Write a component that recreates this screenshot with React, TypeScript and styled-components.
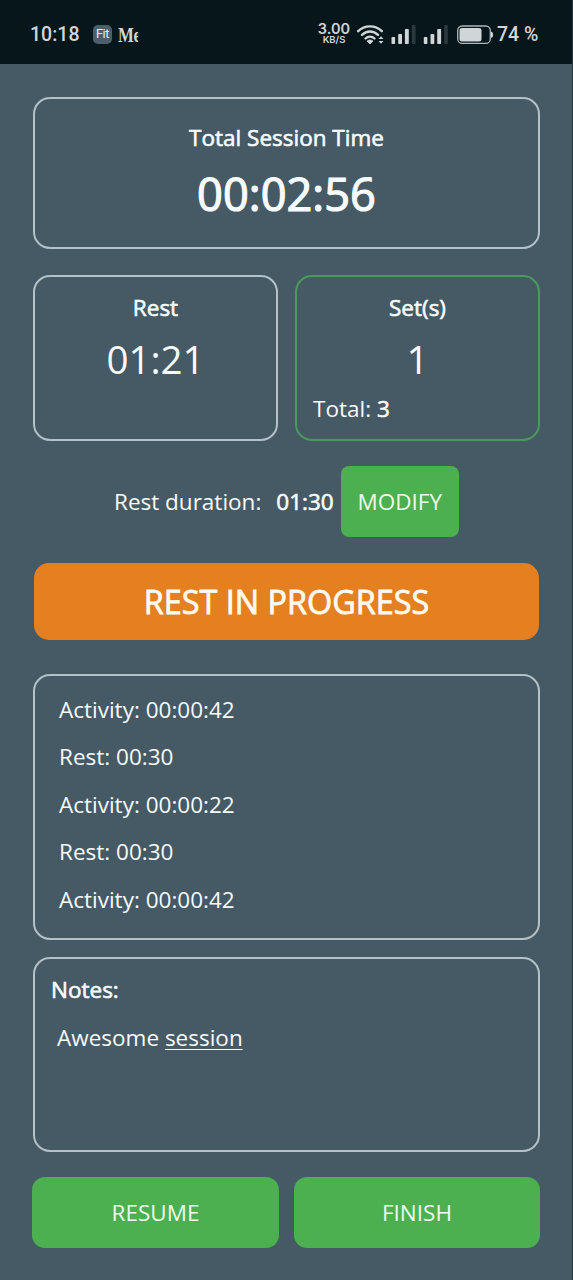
import React from 'react';
import styled, { createGlobalStyle, css } from 'styled-components';

const GlobalStyle = createGlobalStyle`
  * { box-sizing: border-box; }
  body { margin: 0; background: #455a64; }
`;

const strong = css`
  -webkit-text-stroke: 0.6px currentColor;
`;

const Screen = styled.div`
  width: 573px;
  height: 1280px;
  overflow: hidden;
  background: #455a64;
  border-right: 1px solid #27363d;
  color: #f8fbfc;
  font-family: 'Open Sans', 'Noto Sans', sans-serif;
  font-size: 22.5px;
  line-height: 32px;
  white-space: nowrap;
`;

const StatusBar = styled.header`
  width: 573px;
  height: 64px;
  padding: 5px 35px 0 30px;
  display: flex;
  align-items: center;
  background: #06161b;
  color: #d0d6d8;
  font-family: Roboto, sans-serif;
`;

const Clock = styled.span`
  width: 63px;
  font-size: 19.5px;
  font-weight: 500;
`;

const FitBadge = styled.span`
  width: 19px;
  height: 19px;
  border-radius: 5px;
  background: #4b5f6a;
  color: #e8eef0;
  font-size: 12.5px;
  line-height: 18px;
  letter-spacing: -0.3px;
  text-align: center;
`;

const CutLabel = styled.span`
  width: 24px;
  margin: 0 auto 0 6px;
  overflow: hidden;
  font: bold 20px/24px 'Liberation Serif', serif;
  letter-spacing: -0.5px;
  transform: scaleX(0.84);
  transform-origin: left;
`;

const NetSpeed = styled.div`
  width: 34px;
  margin-right: 6px;
  display: flex;
  flex-direction: column;
  align-items: center;
  font: 600 9.5px/12px Inter, sans-serif;
  b {
    font-size: 14.5px;
    font-weight: 600;
    line-height: 11px;
  }
`;

const StatusIcons = styled.svg`
  display: block;
  margin-right: 3px;
`;

const Percent = styled.span`
  width: 41px;
  font-size: 19.5px;
  font-weight: 500;
`;

const Content = styled.main`
  padding: 33px 32px 0 33px;
`;

const Card = styled.section<{ $h: number; $green?: boolean; $top?: number }>`
  height: ${p => p.$h}px;
  padding-top: ${p => p.$top ?? 15}px;
  border: 2px solid ${p => (p.$green ? '#4a9a5d' : '#b5c0c7')};
  border-radius: 17px;
`;

const Title = styled.div`
  ${strong}
  text-align: center;
`;

const SessionTime = styled.div`
  -webkit-text-stroke: 1.2px currentColor;
  margin-top: 11px;
  font-size: 45.2px;
  line-height: 58px;
  text-align: center;
`;

const CardPair = styled.div`
  margin-top: 26px;
  display: grid;
  grid-template-columns: 245px 245px;
  gap: 17px;
`;

const Figure = styled.div`
  margin-top: 9px;
  font-size: 38.5px;
  line-height: 52px;
  text-align: center;
`;

const Total = styled.div`
  margin: 8px 0 0 16px;
`;

const Strong = styled.span`
  ${strong}
`;

const DurationRow = styled.div`
  height: 71px;
  margin: 25px 0 0 81px;
  display: flex;
  align-items: center;
`;

const Duration = styled(Strong)`
  margin: 0 7px 0 15px;
`;

const Button = styled.button<{ $radius?: number }>`
  height: 100%;
  padding: 0;
  border: 0;
  border-radius: ${p => p.$radius ?? 13}px;
  background: #4caf50;
  color: #f0faee;
  font: inherit;
`;

const ModifyButton = styled(Button)`
  width: 118px;
`;

const Banner = styled.div`
  height: 77px;
  margin: 26px 0 0 1px;
  width: 505px;
  border-radius: 15px;
  background: #e48020;
  color: #fffaf0;
  font-size: 32.4px;
  line-height: 77px;
  text-align: center;
  -webkit-text-stroke: 0.8px currentColor;
`;

const LogCard = styled(Card)`
  margin-top: 34px;
  padding-left: 24px;
`;

const LogLine = styled.div`
  line-height: 47.6px;
`;

const NotesCard = styled(Card)`
  margin-top: 17px;
  padding-left: 16px;
`;

const NoteText = styled.div`
  margin: 16px 0 0 6px;
`;

const Misspelled = styled.span`
  text-decoration: underline;
  text-decoration-thickness: 1px;
  text-underline-offset: 3px;
  text-decoration-skip-ink: none;
`;

const Actions = styled.div`
  height: 71px;
  margin: 25px -2px 0 -1px;
  display: grid;
  grid-template-columns: 247px 246px;
  gap: 15px;
`;

const log = [
  'Activity: 00:00:42',
  'Rest: 00:30',
  'Activity: 00:00:22',
  'Rest: 00:30',
  'Activity: 00:00:42',
];

function Signal({ x }: { x: number }) {
  return (
    <g fill="#d0d6d8">
      <rect x={x} y="13" width="3.6" height="7" rx="0.8" />
      <rect x={x + 6.7} y="10" width="3.8" height="10" rx="0.8" />
      <rect x={x + 13.4} y="5" width="3.9" height="15" rx="0.8" />
      <rect x={x + 20.4} y="1" width="3.6" height="19" rx="0.8" fill="#2c393e" />
    </g>
  );
}

export default function App() {
  return (
    <>
      <GlobalStyle />
      <Screen>
        <StatusBar>
          <Clock>10:18</Clock>
          <FitBadge>Fit</FitBadge>
          <CutLabel>Me</CutLabel>
          <NetSpeed><b>3.00</b>KB/S</NetSpeed>
          <StatusIcons width="137" height="22" viewBox="0 0 137 22">
            <g fill="none" stroke="#d0d6d8" strokeWidth="2.4" strokeLinecap="round">
              <path d="M1.2 7.2C7.5.7 18.5.7 24.8 7.2" />
              <path d="M5 10.9C9.5 6.3 16.5 6.3 21 10.9" />
              <path d="M8.5 14.5C11 12 15 12 17.5 14.5" />
            </g>
            <path d="M10.2 17C11.8 15.7 14.2 15.7 15.8 17L13 20Z" fill="#d0d6d8" stroke="#d0d6d8" strokeLinejoin="round" />
            <path d="M21.5 15L24 12.2 26.5 15ZM21.5 17L24 19.8 26.5 17Z" fill="#d0d6d8" />
            <Signal x={34.5} />
            <Signal x={66.8} />
            <rect x="100.7" y="2" width="32.6" height="17.4" rx="4.5" fill="none" stroke="#aeb7ba" strokeWidth="1.3" />
            <rect x="102.5" y="4" width="22" height="13.5" rx="2.5" fill="#d0d6d8" />
            <path d="M134 7.5q2.2.5 2.2 3.2t-2.2 3.2z" fill="#d0d6d8" />
          </StatusIcons>
          <Percent>74 %</Percent>
        </StatusBar>
        <Content>
          <Card $h={152} $top={23}>
            <Title>Total Session Time</Title>
            <SessionTime>00:02:56</SessionTime>
          </Card>
          <CardPair>
            <Card $h={166}>
              <Title>Rest</Title>
              <Figure>01:21</Figure>
            </Card>
            <Card $h={166} $green>
              <Title>Set(s)</Title>
              <Figure>1</Figure>
              <Total>Total: <Strong>3</Strong></Total>
            </Card>
          </CardPair>
          <DurationRow>
            <span>Rest duration:</span>
            <Duration>01:30</Duration>
            <ModifyButton $radius={8}>MODIFY</ModifyButton>
          </DurationRow>
          <Banner>REST IN PROGRESS</Banner>
          <LogCard $h={266} $top={9.7}>
            {log.map((line, i) => <LogLine key={i}>{line}</LogLine>)}
          </LogCard>
          <NotesCard $h={195} $top={15}>
            <Strong>Notes:</Strong>
            <NoteText>Awesome <Misspelled>session</Misspelled></NoteText>
          </NotesCard>
          <Actions>
            <Button>RESUME</Button>
            <Button>FINISH</Button>
          </Actions>
        </Content>
      </Screen>
    </>
  );
}
